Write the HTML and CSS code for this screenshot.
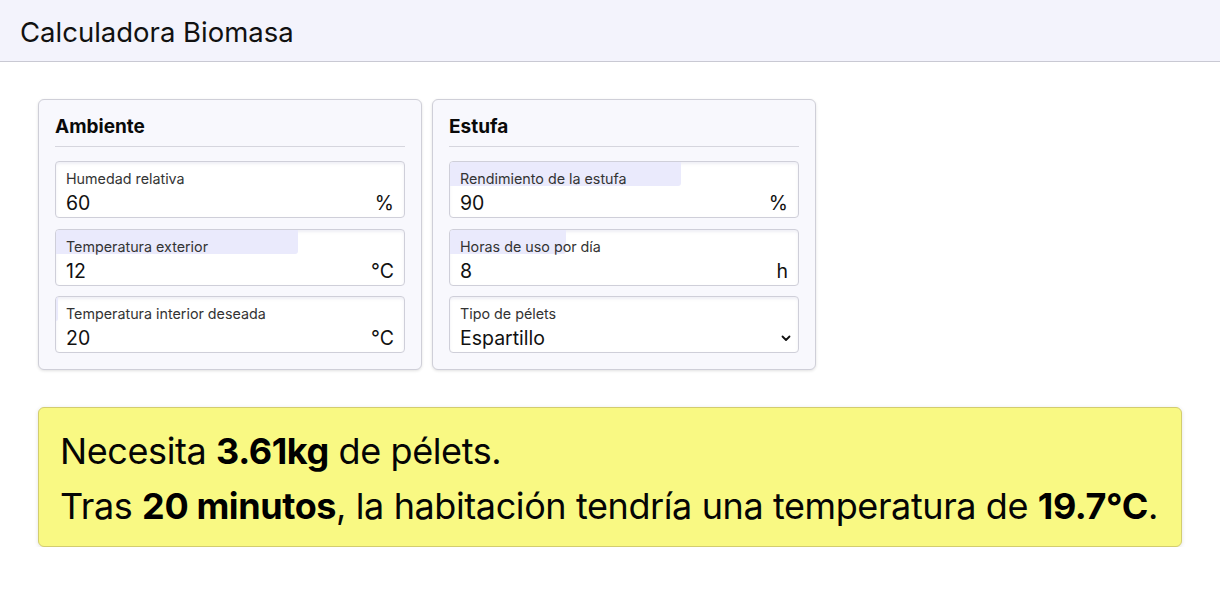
FILE: index.html
```html
<!DOCTYPE html>
<html lang="es">
<head>
<meta charset="utf-8">
<title>Calculadora Biomasa</title>
<link rel="stylesheet" href="styles.css">
</head>
<body>
<header class="topbar"><h1 class="title">Calculadora Biomasa</h1></header>
<main class="content">
  <div class="cards">
    <section class="card">
      <h2 class="card-title">Ambiente</h2>
      <label class="field">
        <span class="bar" style="width:0%"></span>
        <span class="label">Humedad relativa</span>
        <span class="row"><span class="value">60</span><span class="unit">%</span></span>
      </label>
      <label class="field">
        <span class="bar" style="width:69.5%"></span>
        <span class="label">Temperatura exterior</span>
        <span class="row"><span class="value">12</span><span class="unit">°C</span></span>
      </label>
      <label class="field">
        <span class="bar" style="width:0.6%"></span>
        <span class="label">Temperatura interior deseada</span>
        <span class="row"><span class="value">20</span><span class="unit">°C</span></span>
      </label>
    </section>
    <section class="card">
      <h2 class="card-title">Estufa</h2>
      <label class="field">
        <span class="bar" style="width:66.5%"></span>
        <span class="label">Rendimiento de la estufa</span>
        <span class="row"><span class="value">90</span><span class="unit">%</span></span>
      </label>
      <label class="field">
        <span class="bar" style="width:33.3%"></span>
        <span class="label">Horas de uso por día</span>
        <span class="row"><span class="value">8</span><span class="unit">h</span></span>
      </label>
      <label class="field field-select">
        <span class="label">Tipo de pélets</span>
        <span class="row"><span class="value">Espartillo</span>
          <svg class="chev" width="10" height="7" viewBox="0 0 10 7"><path d="M1.5 1.5 L5 5 L8.5 1.5" fill="none" stroke="#111" stroke-width="1.8" stroke-linecap="round" stroke-linejoin="round"/></svg>
        </span>
      </label>
    </section>
  </div>
  <div class="result">
    <p class="line">Necesita <b>3.61kg</b> de pélets.</p>
    <p class="line">Tras <b>20 minutos</b>, la habitación tendría una temperatura de <b>19.7°C</b>.</p>
  </div>
</main>
</body>
</html>
```
FILE: styles.css
```css
* { box-sizing: border-box; }
html, body { margin: 0; padding: 0; }
body {
  font-family: Inter, "Noto Sans", sans-serif;
  color: #111;
  background: #fff;
}
.topbar {
  height: 62px;
  background: #f3f3fc;
  border-bottom: 1px solid #c9c9d3;
  display: flex;
  align-items: center;
  padding: 0 20px;
}
.title {
  margin: 0;
  font-size: 27.5px;
  font-weight: 400;
  color: #111;
  position: relative;
  top: 1px;
}
.content {
  padding: 37px 38px 0 38px;
}
.cards {
  display: flex;
  gap: 10px;
}
.card {
  width: 384px;
  background: #f8f8fd;
  border: 1px solid #cfcfd8;
  border-radius: 6px;
  box-shadow: 0 1px 3px rgba(0,0,0,0.12);
  padding: 15px 16px 16px 16px;
  display: flex;
  flex-direction: column;
  gap: 10.5px;
}
.card-title {
  margin: 0 0 3.5px 0;
  font-size: 19px;
  font-weight: 700;
  padding-bottom: 7px;
  border-bottom: 1px solid #d6d6de;
  line-height: 24px;
  color: #0a0a0a;
}
.field {
  position: relative;
  display: flex;
  flex-direction: column;
  height: 57px;
  background: #fff;
  border: 1px solid #cfcfd9;
  border-radius: 4px;
  box-shadow: inset 0 2px 3px rgba(120,120,170,0.12);
  padding: 8px 10px 0 10px;
  overflow: hidden;
}
.bar {
  position: absolute;
  left: 0;
  top: 0;
  height: 24px;
  background: #eaeafc;
  border-radius: 0 0 3px 0;
}
.label {
  position: relative;
  font-size: 14.3px;
  color: #333;
  line-height: 18px;
}
.row {
  position: relative;
  display: flex;
  justify-content: space-between;
  align-items: center;
  font-size: 19.5px;
  line-height: 26px;
  margin-top: 2px;
}
.field-select { padding-right: 7px; }
.result {
  margin-top: 37px;
  width: 1144px;
  background: #f9f983;
  border: 1px solid #d3cd6f;
  border-radius: 6px;
  box-shadow: 0 1px 4px rgba(0,0,0,0.12);
  padding: 16px 10px 12px 21px;
}
.line {
  margin: 0;
  font-size: 36px;
  line-height: 55px;
  letter-spacing: -0.4px;
  white-space: nowrap;
  color: #050505;
}
.line b { font-weight: 700; color: #000; }
```
